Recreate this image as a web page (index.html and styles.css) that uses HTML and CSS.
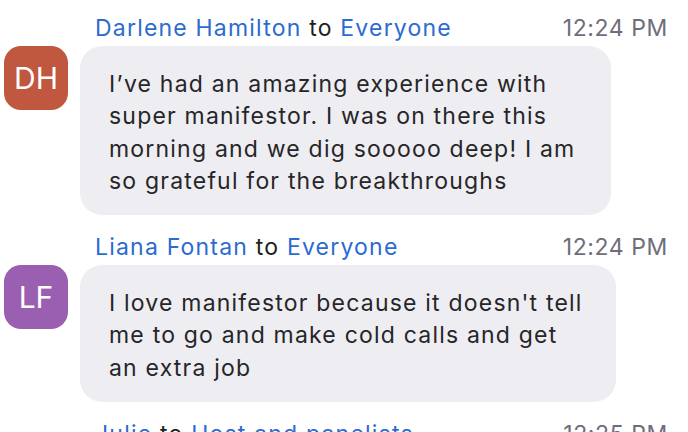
FILE: index.html
```html
<!DOCTYPE html>
<html>
<head>
<meta charset="utf-8">
<link rel="stylesheet" href="styles.css">
</head>
<body>
<div class="chat">
  <div class="msg">
    <div class="head">
      <div class="who"><span class="name">Darlene Hamilton</span> to <span class="name">Everyone</span></div>
      <div class="time">12:24 PM</div>
    </div>
    <div class="row">
      <div class="avatar dh">DH</div>
      <div class="bubble b1">I’ve had an amazing experience with super manifestor. I was on there this morning and we dig sooooo deep! I am so grateful for the breakthroughs</div>
    </div>
  </div>
  <div class="msg">
    <div class="head">
      <div class="who"><span class="name">Liana Fontan</span> to <span class="name">Everyone</span></div>
      <div class="time">12:24 PM</div>
    </div>
    <div class="row">
      <div class="avatar lf">LF</div>
      <div class="bubble b2">I love manifestor because it doesn't tell me to go and make cold calls and get an extra job</div>
    </div>
  </div>
  <div class="msg">
    <div class="head">
      <div class="who"><span class="name">Julie</span> to <span class="name">Host and panelists</span></div>
      <div class="time">12:25 PM</div>
    </div>
  </div>
</div>
</body>
</html>
```

FILE: styles.css
```css
* { box-sizing: border-box; }
html, body { margin: 0; padding: 0; background: #ffffff; }
body {
  font-family: Inter, "Liberation Sans", sans-serif;
  color: #262628;
  font-size: 23px;
  letter-spacing: 1.2px;
}
.chat {
  display: flex;
  flex-direction: column;
}
.head {
  display: flex;
  justify-content: space-between;
  align-items: flex-end;
  height: 46px;
  padding: 0 20px 4px 95px;
  line-height: 28px;
}
.msg + .msg .head { height: 50px; }
.name { color: #2c6bd0; }
.who { color: #1e1e20; }
.time { color: #6e6e7a; letter-spacing: 0.6px; }
.row {
  display: flex;
  align-items: flex-start;
  gap: 12px;
  padding-left: 4px;
}
.avatar {
  width: 64px;
  height: 64px;
  border-radius: 17px;
  color: #fff;
  display: flex;
  align-items: center;
  justify-content: center;
  font-size: 30px;
  letter-spacing: 0;
  flex: none;
}
.dh { background: #c0573f; }
.lf { background: #9b5fb1; }
.bubble {
  background: #eeedf2;
  border-radius: 22px;
  padding: 22px 30px 18px 29px;
  line-height: 32.3px;
}
.b1 { width: 531px; }
.b2 { width: 536px; }
```
